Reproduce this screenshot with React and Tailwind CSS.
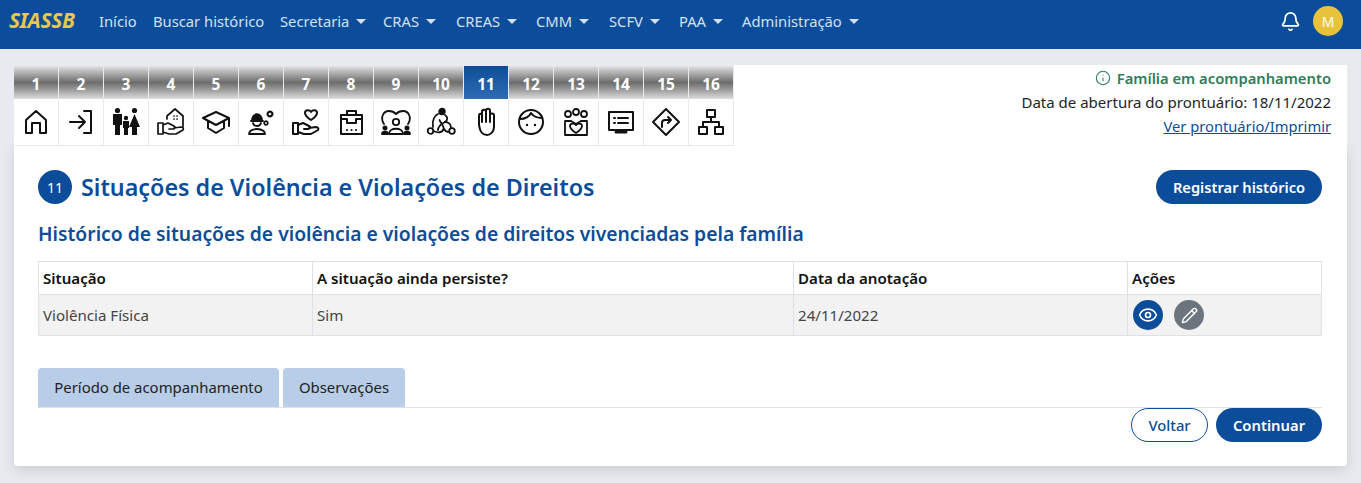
import { Bell, Info, Eye, Pencil } from "lucide-react";

const font = "font-['Noto_Sans',sans-serif]";

function Caret() {
  return <span className="inline-block ml-[7px] mb-[3px] border-x-[5px] border-t-[5px] border-x-transparent border-t-[#d5e0ee]" />;
}

const navItems = [
  ["Início", false, "w-[54px]"],
  ["Buscar histórico", false, "w-[127px]"],
  ["Secretaria", true, "w-[103px]"],
  ["CRAS", true, "w-[73px]"],
  ["CREAS", true, "w-[80px]"],
  ["CMM", true, "w-[73px]"],
  ["SCFV", true, "w-[70px]"],
  ["PAA", true, "w-[63px]"],
  ["Administração", true, "w-[130px]"],
];

// icones das abas, desenhados a mao
const P = { fill: "none", stroke: "#111", strokeWidth: 2, strokeLinecap: "round", strokeLinejoin: "round" };
const icons = [
  <g {...P}><path d="M5 13 15 4l10 9v13h-6V16h-8v10H5z" /></g>,
  <g {...P}><path d="M4 15h15M13 9l6 6-6 6M18 4h7v22h-7" /></g>,
  <g fill="#111">
    <circle cx="6.5" cy="3.5" r="2.6" /><circle cx="23.5" cy="3.5" r="2.6" /><circle cx="15" cy="11" r="2.2" />
    <path d="M2 7h9v11H9v10H4V18H2zM23.5 7l5.5 13h-3v8h-5v-8h-3zM12 14h6v7h-1v7h-4v-7h-1z" />
  </g>,
  <g {...P} strokeWidth="1.7">
    <path d="M11 12V9l8-7 8 7v11" />
    <path d="M2 16h5v11H2zM7 18l5-2 6 3c2 1 1 3-1 3h-4M18 21l7-1c2 0 3 2 2 3l-7 4H13l-6-2" />
    <path d="M18 9h.1M21 9h.1M18 12h.1M21 12h.1" />
  </g>,
  <g {...P}><path d="M15 5 2 11l13 7 13-7zM7 14v7l8 5 8-5v-7M28 11v8" /></g>,
  <g {...P} strokeWidth="1.8">
    <path d="M3 27c0-2 2-5 8-5s8 3 8 5z" />
    <path d="M5 14h12" />
    <path d="M6 14c0-9 10-9 10 0z" fill="#111" />
    <path d="M7 16c1 4 7 4 8 0" />
    <circle cx="24" cy="7" r="2.4" strokeDasharray="2 1" strokeWidth="2.2" />
    <circle cx="20" cy="16" r="1.8" strokeDasharray="1.6 .8" strokeWidth="1.8" />
  </g>,
  <g {...P}>
    <path d="M2 16h5v11H2zM7 18l5-2 6 3c2 1 1 3-1 3h-4M18 21l7-1c2 0 3 2 2 3l-7 4H13l-6-2" />
    <path d="M20 13c-3-2-6-4-6-7 0-3 4-4 6-1 2-3 6-2 6 1 0 3-3 5-6 7z" />
  </g>,
  <g {...P}>
    <path d="M5 8h21v19H5zM11 8V4h9v4M5 12h6v4h9v-4h6" />
    <path d="M11 23h.1M15.5 23h.1M20 23h.1" />
  </g>,
  <g {...P} strokeWidth="1.8">
    <path d="M3 17C-1 11 2 4 8 4c3 0 5 1 7 3 2-2 4-3 7-3 6 0 9 7 5 13" />
    <circle cx="15" cy="15" r="3.2" /><path d="M8 27c0-7 14-7 14 0z" />
    <circle cx="4" cy="21" r="1.6" fill="#111" /><circle cx="26" cy="21" r="1.6" fill="#111" />
    <path d="M1 27c0-3 6-3 6 0zM23 27c0-3 6-3 6 0z" fill="#111" />
  </g>,
  <g {...P} strokeWidth="1.8">
    <circle cx="16" cy="4.5" r="2.8" fill="#111" /><circle cx="4.5" cy="24" r="2.8" /><circle cx="26" cy="24" r="2.8" />
    <path d="M12 7C8 9 6 13 7 20M7.5 24c4 2 9 2 10-2 1-3-3-6-4-9M19 8c3 2 3 5 0 7-4 2-7 5-7 8" />
    <path d="M19 15c3 0 6 2 6 6M23 25c-2 0-4-1-5-3" />
  </g>,
  <g {...P}>
    <path d="M8 18V9c0-3 3-3 3 0V5c0-3 4-3 4 0v-1c0-3 4-3 4 0v4c0-2 4-2 4 0v12c0 5-4 8-7 8-5 0-7-3-8-10z" />
    <path d="M11 8v7M15 5v10M19 5v10" />
  </g>,
  <g {...P}>
    <circle cx="15" cy="15" r="12" />
    <path d="M4 12c5 0 9-2 11-6 2 3 6 5 11 5" />
    <circle cx="11" cy="18" r="1.2" fill="#111" stroke="none" /><circle cx="19" cy="18" r="1.2" fill="#111" stroke="none" />
  </g>,
  <g {...P} strokeWidth="1.8">
    <circle cx="7" cy="7" r="3" /><circle cx="15" cy="5" r="3" /><circle cx="23" cy="7" r="3" />
    <path d="M4 14h6l5 3 5-3h6v14H4z" />
    <path d="M15 26c-3-2-6-4-6-7 0-3 4-3 6-1 2-2 6-2 6 1 0 3-3 5-6 7z" />
  </g>,
  <g {...P}>
    <path d="M3 5h24v18H3z" /><path d="M8 11h1M8 16h1M12 11h10M12 16h10" />
    <path d="M10 25h10" strokeWidth="3" />
  </g>,
  <g {...P}>
    <path d="M15 2l13 13-13 13L2 15z" /><path d="M11 20v-4c0-2 1-3 3-3h6M17 10l3 3-3 3" />
  </g>,
  <g {...P}>
    <path d="M11 3h8v7h-8zM3 20h8v7H3zM19 20h8v7h-8zM15 10v5M7 20v-5h16v5" />
  </g>,
];

function StepTab({ n, active, icon }) {
  return (
    <div className="w-[45px] flex flex-col">
      <div
        className={`h-[33px] mr-px flex items-end justify-center pb-[5px] text-[15.5px] leading-[20px] font-bold text-white ${
          active ? "bg-gradient-to-b from-[#0b4d9a] to-[#2e6cb3]" : "bg-gradient-to-b from-[#e4e4e4] via-[#6d6d6d] to-[#dddddd]"
        }`}
      >
        {n}
      </div>
      <div className="h-[46px] mr-px bg-white flex items-center justify-center">
        <svg viewBox="0 0 30 30" className="w-[30px] h-[30px]">{icon}</svg>
      </div>
    </div>
  );
}

export default function App() {
  return (
    <div className={`${font} bg-[#e7eaef] h-[483px] overflow-hidden text-[15px] text-[#212529]`}>
      <nav className="h-[49px] bg-[#0b4d9a] flex items-center pl-[9px] pr-[18px] pb-[7px]">
        <span className="w-[90px] text-[21px] font-bold italic text-[#e8c84a] tracking-[-0.3px]">SIASSB</span>
        {navItems.map(([label, caret, w]) => (
          <a key={label} className={`${w} shrink-0 whitespace-nowrap text-[14.75px] text-[#d5e0ee]`}>
            {label}
            {caret && <Caret />}
          </a>
        ))}
        <div className="ml-auto flex items-center gap-[12px]">
          <Bell className="w-[21px] h-[21px] text-white" strokeWidth={2} />
          <div className="w-[30px] h-[30px] rounded-full bg-[#e9c23c] text-white text-[14px] flex items-center justify-center">M</div>
        </div>
      </nav>

      <div className="mx-[14px] mt-[16px] w-[1333px]">
        <div className="flex h-[81px]">
          <div className="flex pt-px bg-[#e7eaef]">
            {icons.map((icon, i) => (
              <StepTab key={i} n={i + 1} active={i === 10} icon={icon} />
            ))}
          </div>
          <div className="flex-1 bg-white pr-[16px] flex flex-col items-end pt-[1px] text-[15px] leading-[24px]">
            <div className="flex items-center gap-[6px] text-[14.75px] text-[#2e7d5b] font-semibold">
              <Info className="w-[16px] h-[16px]" strokeWidth={1.6} />
              Família em acompanhamento
            </div>
            <div>Data de abertura do prontuário: 18/11/2022</div>
            <a className="text-[14.7px] text-[#0b4d9a] underline">Ver prontuário/Imprimir</a>
          </div>
        </div>

        <div className="h-[320px] bg-white rounded-b-[4px] shadow-[0_4px_14px_rgba(0,0,0,0.12)] pl-[24px] pr-[25px] pt-[24px]">
          <div className="flex items-center justify-between h-[34px]">
            <div className="flex items-center gap-[9px]">
              <span className="w-[34px] h-[34px] rounded-full bg-[#0b4d9a] text-white text-[14px] flex items-center justify-center">11</span>
              <h1 className="pt-px text-[23.3px] font-semibold text-[#0b4d9a]">Situações de Violência e Violações de Direitos</h1>
            </div>
            <button className="w-[166px] h-[34px] rounded-full bg-[#0b4d9a] text-white text-[14.7px] font-semibold">Registrar histórico</button>
          </div>

          <h2 className="mt-[16px] h-[28px] text-[19.3px] leading-[28px] font-semibold text-[#0b4d9a]">
            Histórico de situações de violência e violações de direitos vivenciadas pela família
          </h2>

          <table className="mt-[13px] w-[1283px] table-fixed border-collapse text-[15.1px]">
            <colgroup>
              <col className="w-[274px]" />
              <col className="w-[481px]" />
              <col className="w-[334px]" />
              <col className="w-[194px]" />
            </colgroup>
            <thead>
              <tr className="h-[33px] text-left text-[#111]">
                <th className="border border-[#dee2e6] px-[4px] font-semibold">Situação</th>
                <th className="border border-[#dee2e6] px-[4px] font-semibold">A situação ainda persiste?</th>
                <th className="border border-[#dee2e6] px-[4px] font-semibold">Data da anotação</th>
                <th className="border border-[#dee2e6] px-[4px] font-semibold">Ações</th>
              </tr>
            </thead>
            <tbody>
              <tr className="h-[41px] bg-[#f2f2f2] text-[#444]">
                <td className="border border-[#dee2e6] px-[4px]">Violência Física</td>
                <td className="border border-[#dee2e6] px-[4px]">Sim</td>
                <td className="border border-[#dee2e6] px-[4px]">24/11/2022</td>
                <td className="border border-[#dee2e6] px-[4px] py-0">
                  <div className="flex gap-[11px] pl-px">
                    <span className="w-[30px] h-[30px] rounded-full bg-[#0b4d9a] flex items-center justify-center">
                      <Eye className="w-[20px] h-[20px] text-white" strokeWidth={2} />
                    </span>
                    <span className="w-[30px] h-[30px] rounded-full bg-[#6c757d] flex items-center justify-center">
                      <Pencil className="w-[17px] h-[17px] text-white" strokeWidth={2} />
                    </span>
                  </div>
                </td>
              </tr>
            </tbody>
          </table>

          <div className="mt-[32px] h-[40px] w-[1284px] border-b border-[#dee2e6] flex gap-[4px] text-[14.9px] text-[#222]">
            <div className="w-[241px] h-[39px] bg-[#b8cde8] rounded-t-[4px] flex items-center justify-center">Período de acompanhamento</div>
            <div className="w-[122px] h-[39px] bg-[#b8cde8] rounded-t-[4px] flex items-center justify-center">Observações</div>
          </div>

          <div className="flex justify-end gap-[8px] text-[14.8px] font-semibold">
            <button className="w-[77px] h-[34px] rounded-full border border-[#0b4d9a] text-[#0b4d9a] font-medium">Voltar</button>
            <button className="w-[106px] h-[34px] rounded-full bg-[#0b4d9a] text-white">Continuar</button>
          </div>
        </div>
      </div>
    </div>
  );
}
